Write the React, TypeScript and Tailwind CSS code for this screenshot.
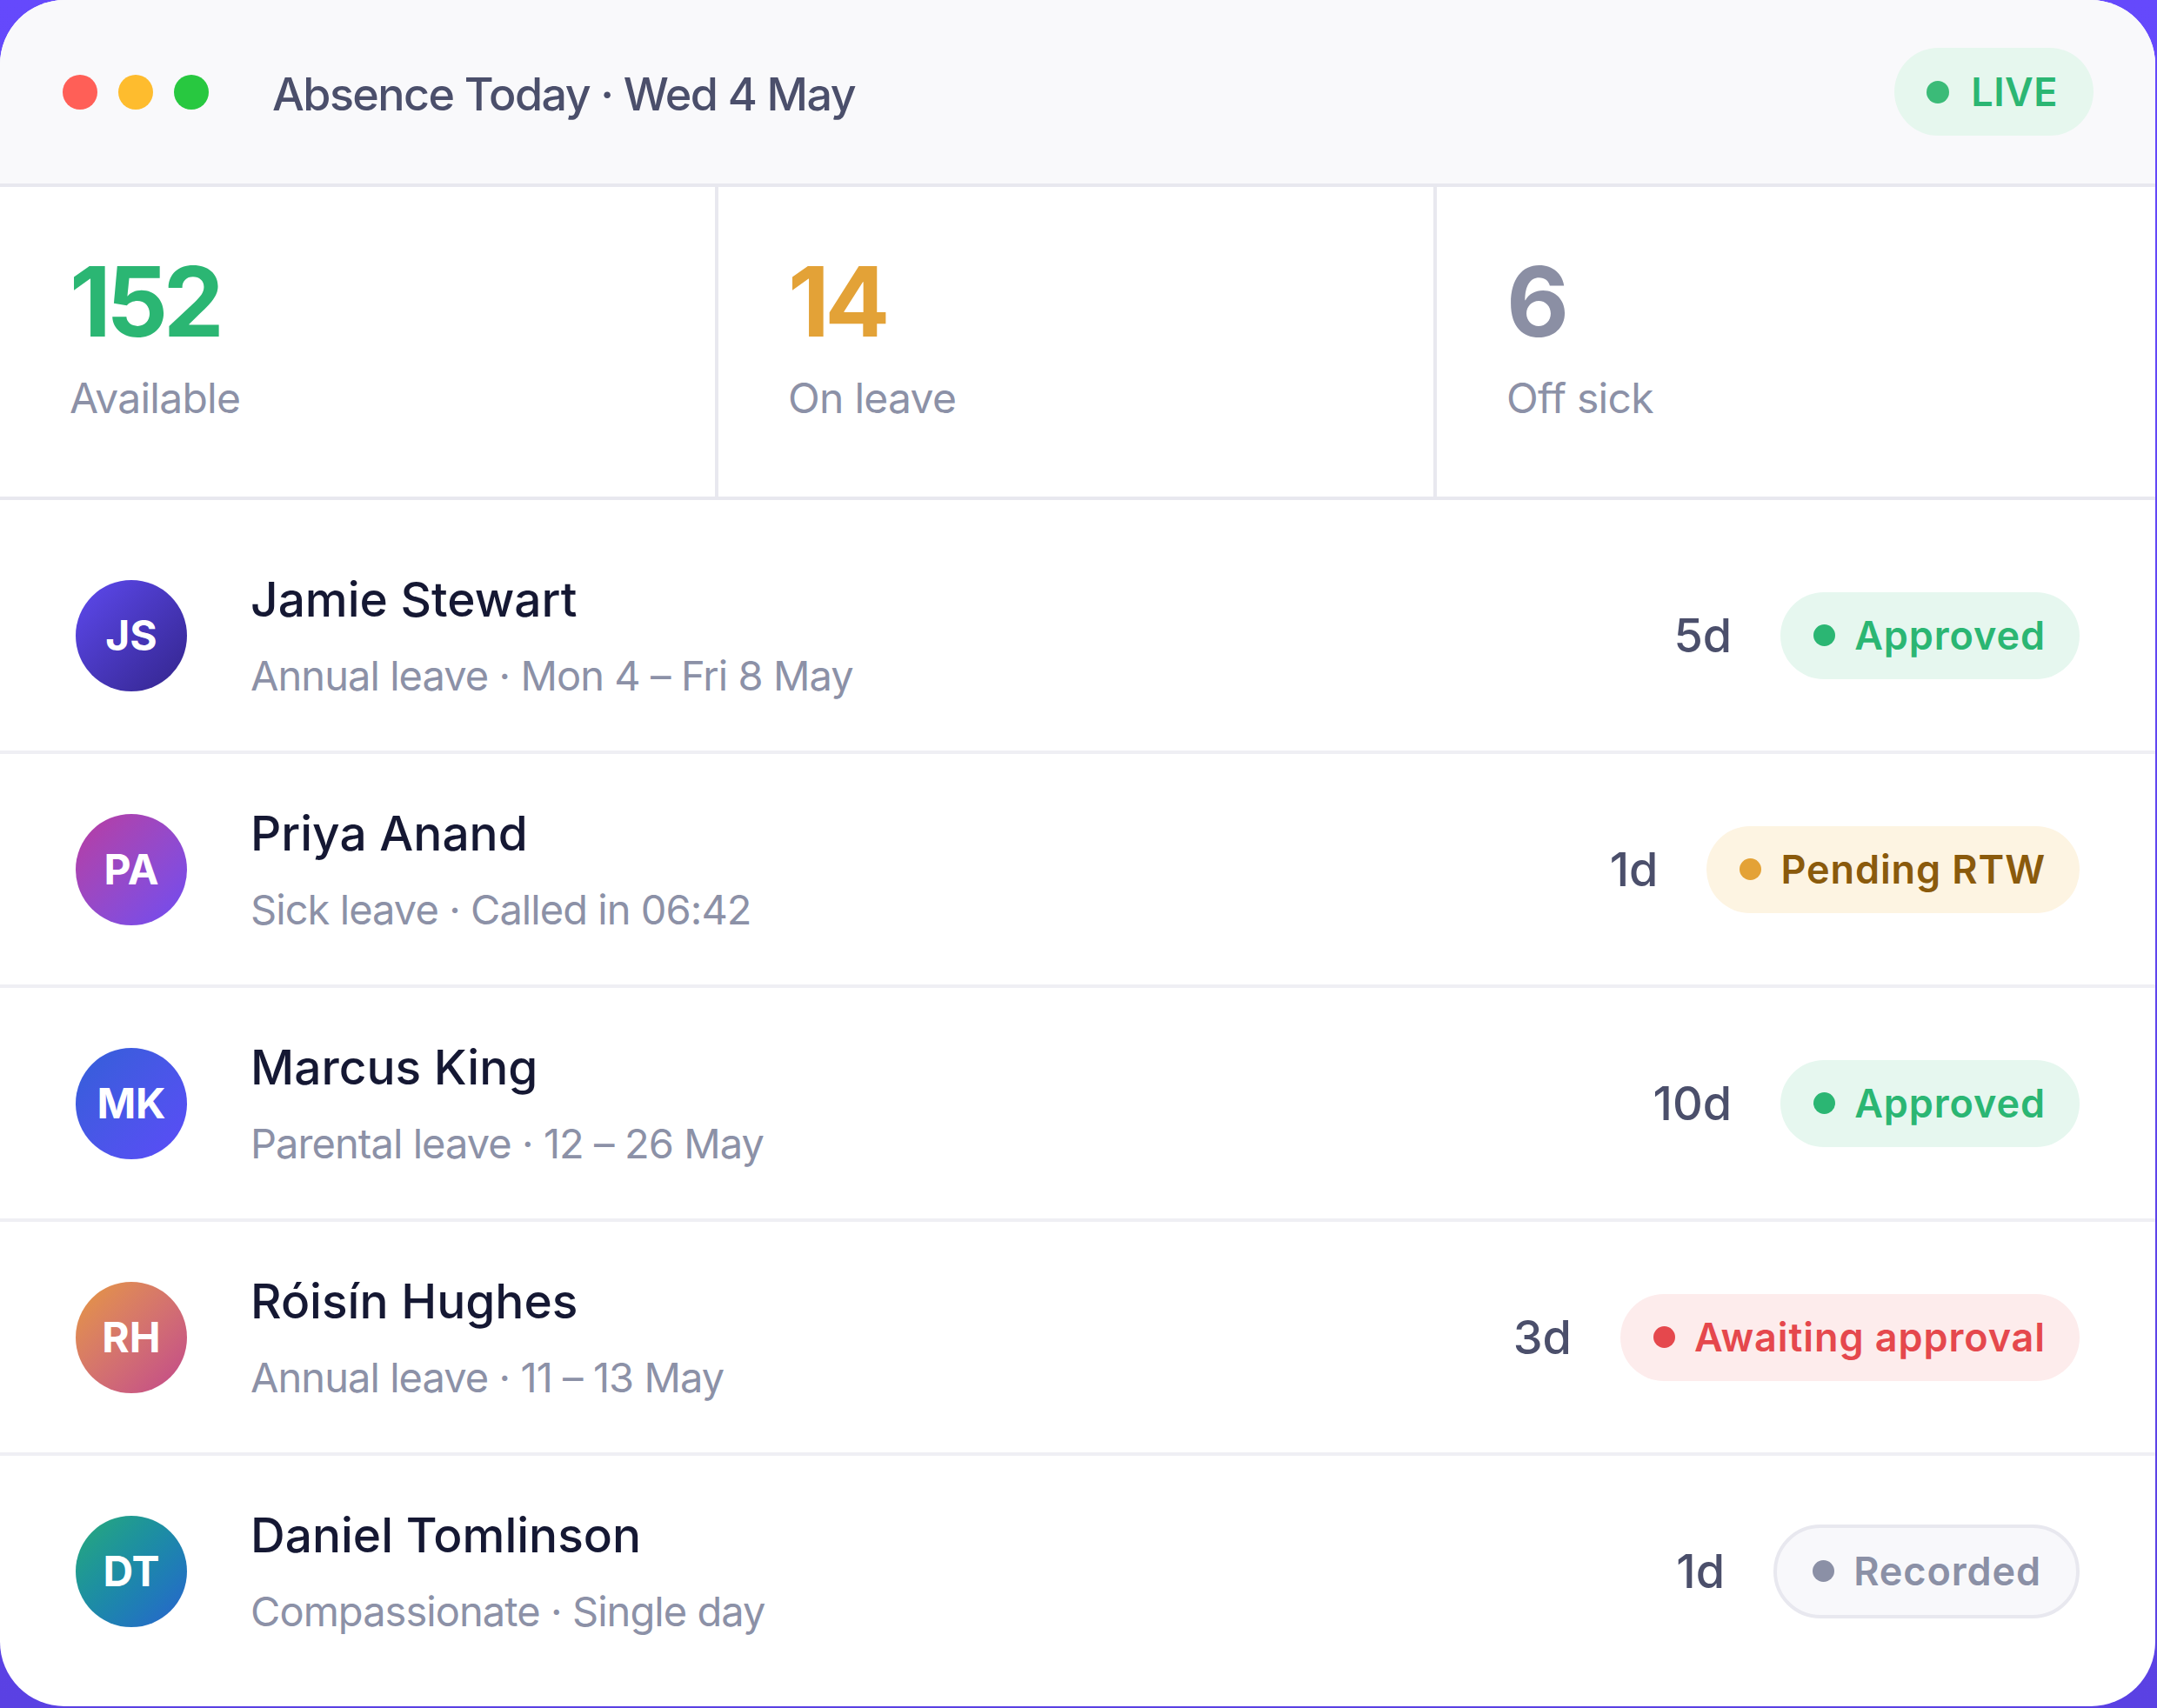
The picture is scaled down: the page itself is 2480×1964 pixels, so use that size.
import React from 'react';

type Status = 'approved' | 'pending' | 'awaiting' | 'recorded';

interface Absence {
  initials: string;
  name: string;
  detail: string;
  days: string;
  status: Status;
  avatar: string;
}

const absences: Absence[] = [
  { initials: 'JS', name: 'Jamie Stewart', detail: 'Annual leave · Mon 4 – Fri 8 May', days: '5d', status: 'approved', avatar: 'bg-linear-to-br from-[#5e4af0] to-[#33258c]' },
  { initials: 'PA', name: 'Priya Anand', detail: 'Sick leave · Called in 06:42', days: '1d', status: 'pending', avatar: 'bg-linear-to-br from-[#b93aa0] to-[#6f4af2]' },
  { initials: 'MK', name: 'Marcus King', detail: 'Parental leave · 12 – 26 May', days: '10d', status: 'approved', avatar: 'bg-linear-to-br from-[#325fd8] to-[#5b4bf8]' },
  { initials: 'RH', name: 'Róisín Hughes', detail: 'Annual leave · 11 – 13 May', days: '3d', status: 'awaiting', avatar: 'bg-linear-to-br from-[#e6983a] to-[#c2468a]' },
  { initials: 'DT', name: 'Daniel Tomlinson', detail: 'Compassionate · Single day', days: '1d', status: 'recorded', avatar: 'bg-linear-to-br from-[#2aaa76] to-[#2a60cf]' },
];

const statusStyles: Record<Status, { label: string; pill: string; dot: string }> = {
  approved: { label: 'Approved', pill: 'bg-[#e6f7ef] text-[#2bb673] pl-[38px] pr-[39px]', dot: 'bg-[#2bb673]' },
  pending: { label: 'Pending RTW', pill: 'bg-[#fdf4e2] text-[#8a5a0c] pl-[38px] pr-[39px]', dot: 'bg-[#e4a236]' },
  awaiting: { label: 'Awaiting approval', pill: 'bg-[#fdecec] text-[#e5484d] pl-[38px] pr-[39px]', dot: 'bg-[#e5484d]' },
  recorded: { label: 'Recorded', pill: 'bg-[#f8f8fb] text-[#8b90a6] border-4 border-[#e8e8ef] pl-[41px] pr-[40px] box-content', dot: 'bg-[#8b90a6]' },
};

const stats = [
  { value: '152', label: 'Available', color: 'text-[#2bb673]' },
  { value: '14', label: 'On leave', color: 'text-[#e3a237]' },
  { value: '6', label: 'Off sick', color: 'text-[#8b8fa4]' },
];

function StatusPill({ status }: { status: Status }) {
  const s = statusStyles[status];
  return (
    <span className={`flex h-[100px] items-center gap-[22px] rounded-full ${s.pill}`}>
      <span className={`h-[25px] w-[25px] rounded-full ${s.dot}`} />
      <span className="text-[45px] font-semibold leading-none tracking-[0.02em]">{s.label}</span>
    </span>
  );
}

export default function App() {
  return (
    <div className="w-[2480px] h-[1964px] bg-linear-to-b from-[#6549fc] to-[#5a41e3] font-['Inter','Noto_Sans',sans-serif]">
      <div className="w-[2478px] h-[1962px] rounded-[74px] overflow-hidden bg-white flex flex-col">
        {/* header bar */}
        <div className="h-[211px] box-content border-b-4 border-[#e8e8ef] bg-[#f9f9fb] flex items-center pl-[72px] pr-[71px]">
          <div className="flex gap-[24px]">
            <span className="h-[40px] w-[40px] rounded-full bg-[#ff5f57]" />
            <span className="h-[40px] w-[40px] rounded-full bg-[#febc2e]" />
            <span className="h-[40px] w-[40px] rounded-full bg-[#28c840]" />
          </div>
          <h1 className="ml-[73px] pt-[6px] text-[52px] font-medium leading-none tracking-[-0.03em] text-[#4b4f6b]">Absence Today · Wed 4 May</h1>
          <span className="ml-auto flex h-[101px] items-center gap-[25px] rounded-full bg-[#e6f7ee] pl-[37px] pr-[41px]">
            <span className="h-[26px] w-[26px] rounded-full bg-[#3bbb78]" />
            <span className="text-[45px] font-semibold leading-none tracking-[0.01em] text-[#2bb673]">LIVE</span>
          </span>
        </div>

        {/* totals */}
        <div className="grid grid-cols-3 h-[356px] box-content border-b-4 border-[#e8e8ef]">
          {stats.map((st, i) => (
            <div key={st.label} className={`pt-[76px] pl-[80px] ${i < 2 ? 'border-r-4 border-[#e8e8ef]' : ''}`}>
              <div className={`text-[111px] font-bold leading-none tracking-[-0.05em] ${st.color}`}>{st.value}</div>
              <div className="mt-[32px] text-[48px] leading-none tracking-[-0.015em] text-[#8c91a7]">{st.label}</div>
            </div>
          ))}
        </div>

        {/* people off today */}
        <div className="py-[23px]">
          {absences.map(a => (
            <div key={a.name} className="flex h-[265px] box-content items-center px-[87px] border-b-4 border-[#efeff4] last:border-b-0">
              <div className={`flex h-[128px] w-[128px] shrink-0 items-center justify-center rounded-full text-[48px] font-bold text-white ${a.avatar}`}>
                {a.initials}
              </div>
              <div className="ml-[73px] flex flex-col">
                <span className="text-[55px] font-medium leading-none text-[#151833]">{a.name}</span>
                <span className="mt-[36px] text-[47px] leading-none tracking-[-0.02em] text-[#8c91a7]">{a.detail}</span>
              </div>
              <div className="ml-auto flex items-center gap-[56px]">
                <span className="text-[54px] font-medium leading-none text-[#4b4f6b]">{a.days}</span>
                <StatusPill status={a.status} />
              </div>
            </div>
          ))}
        </div>
      </div>
    </div>
  );
}
